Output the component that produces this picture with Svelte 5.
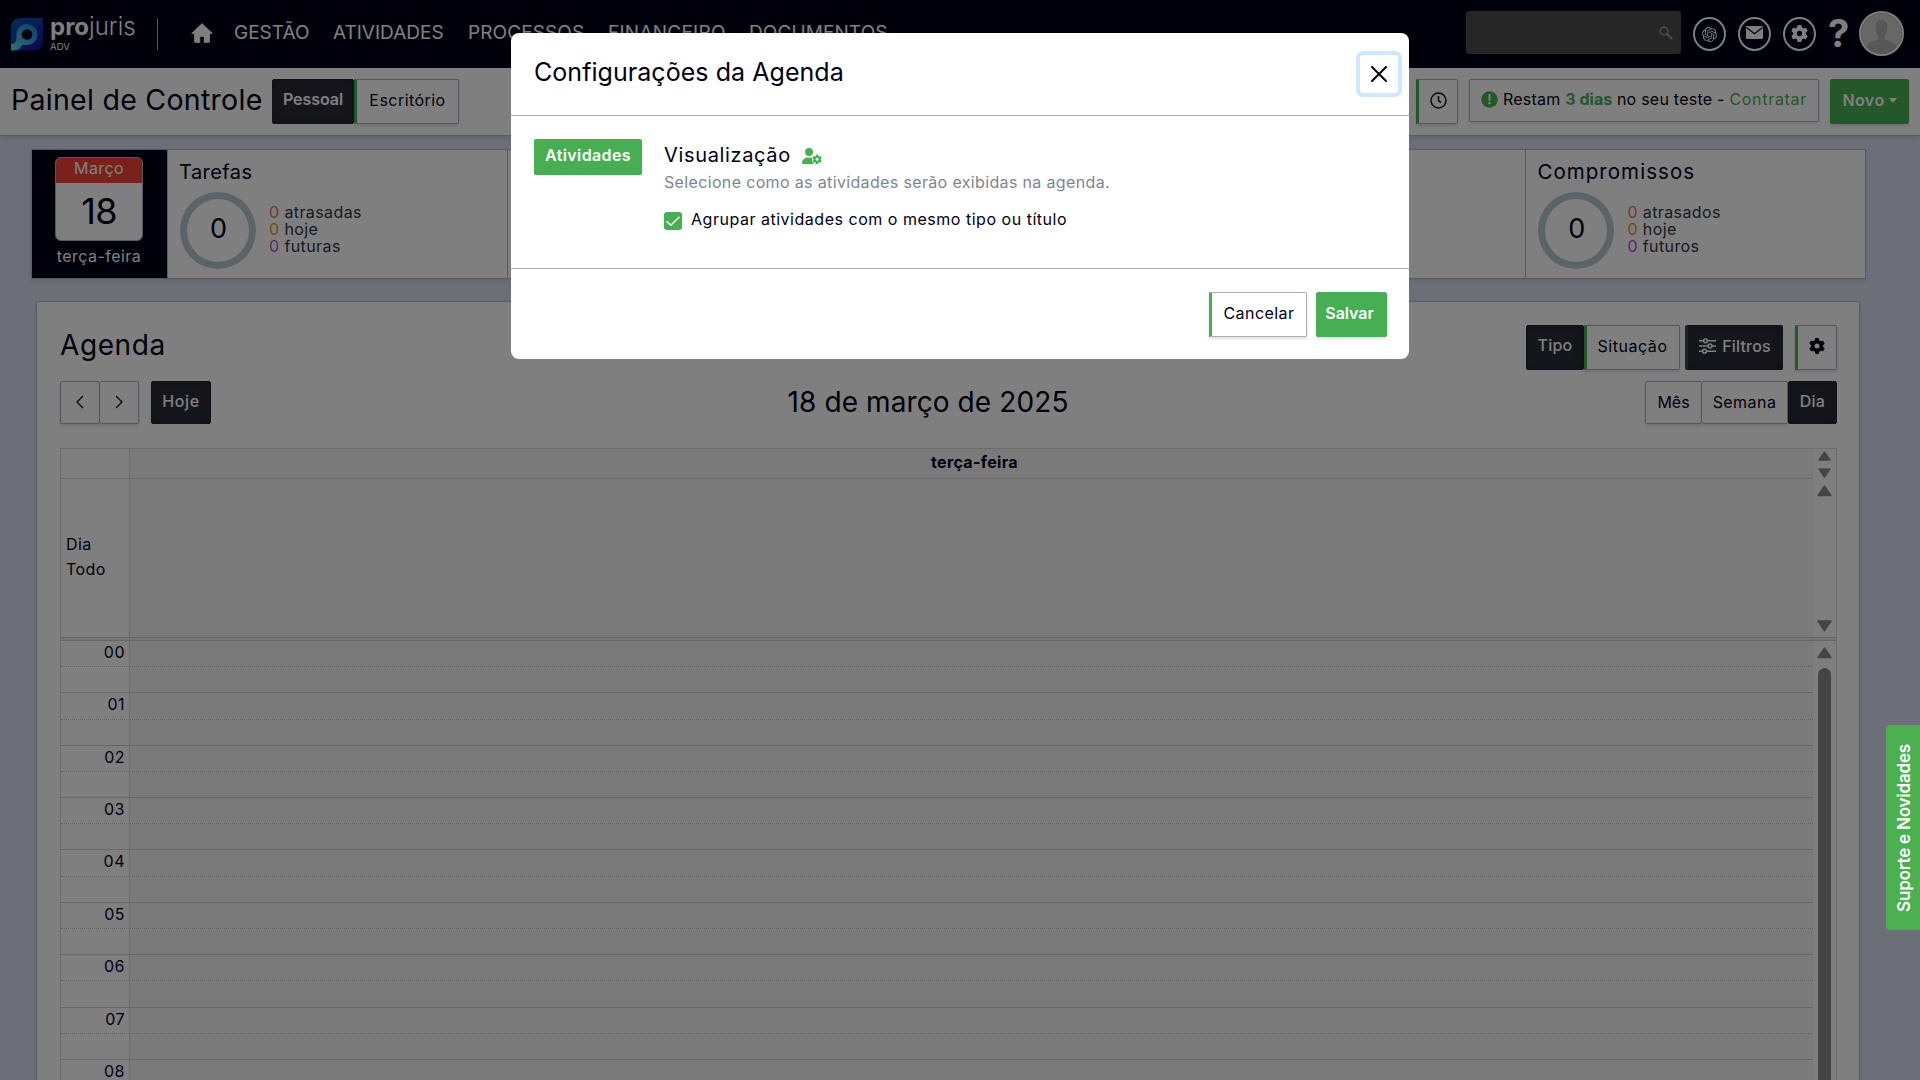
<script>
  const nav = [
    { label: 'GESTÃO', cls: 'n1' },
    { label: 'ATIVIDADES', cls: 'n2' },
    { label: 'PROCESSOS', cls: 'n3' },
    { label: 'FINANCEIRO', cls: 'n4' },
    { label: 'DOCUMENTOS', cls: 'n5' }
  ];
  // Entries without a title are panels that have not loaded their counters.
  const stats = [
    { title: 'Tarefas', total: 0, late: 'atrasadas', today: 'hoje', future: 'futuras' },
    {},
    {},
    {},
    { title: 'Compromissos', total: 0, late: 'atrasados', today: 'hoje', future: 'futuros' }
  ];
  const hours = ['00', '01', '02', '03', '04', '05', '06', '07', '08'];
  const gear =
    'M495.9 166.6c3.2 8.7 .5 18.4-6.4 24.6l-43.3 39.4c1.1 8.3 1.7 16.8 1.7 25.4s-.6 17.1-1.7 25.4l43.3 39.4c6.9 6.2 9.6 15.9 6.4 24.6c-4.4 11.9-9.7 23.3-15.8 34.3l-4.7 8.1c-6.6 11-14 21.4-22.1 31.2c-5.9 7.2-15.7 9.6-24.5 6.8l-55.7-17.7c-13.4 10.3-28.2 18.9-44 25.4l-12.5 57.1c-2 9.1-9 16.3-18.2 17.8c-13.8 2.3-28 3.5-42.5 3.5s-28.7-1.2-42.5-3.5c-9.2-1.5-16.2-8.7-18.2-17.8l-12.5-57.1c-15.8-6.5-30.6-15.1-44-25.4L83.1 425.9c-8.8 2.8-18.6 .3-24.5-6.8c-8.1-9.8-15.5-20.2-22.1-31.2l-4.7-8.1c-6.1-11-11.4-22.4-15.8-34.3c-3.2-8.7-.5-18.4 6.4-24.6l43.3-39.4C64.6 273.1 64 264.6 64 256s.6-17.1 1.7-25.4L22.4 191.2c-6.9-6.2-9.6-15.9-6.4-24.6c4.4-11.9 9.7-23.3 15.8-34.3l4.7-8.1c6.6-11 14-21.4 22.1-31.2c5.9-7.2 15.7-9.6 24.5-6.8l55.7 17.7c13.4-10.3 28.2-18.9 44-25.4l12.5-57.1c2-9.1 9-16.3 18.2-17.8C227.3 1.2 241.5 0 256 0s28.7 1.2 42.5 3.5c9.2 1.5 16.2 8.7 18.2 17.8l12.5 57.1c15.8 6.5 30.6 15.1 44 25.4l55.7-17.7c8.8-2.8 18.6-.3 24.5 6.8c8.1 9.8 15.5 20.2 22.1 31.2l4.7 8.1c6.1 11 11.4 22.4 15.8 34.3zM256 336a80 80 0 1 0 0-160 80 80 0 1 0 0 160z';
  const knot =
    'M22.2819 9.8211a5.9847 5.9847 0 0 0-.5157-4.9108 6.0462 6.0462 0 0 0-6.5098-2.9A6.0651 6.0651 0 0 0 4.9807 4.1818a5.9847 5.9847 0 0 0-3.9977 2.9 6.0462 6.0462 0 0 0 .7427 7.0966 5.98 5.98 0 0 0 .511 4.9107 6.051 6.051 0 0 0 6.5146 2.9001A5.9847 5.9847 0 0 0 13.2599 24a6.0557 6.0557 0 0 0 5.7718-4.2058 5.9894 5.9894 0 0 0 3.9977-2.9001 6.0557 6.0557 0 0 0-.7475-7.0729zm-9.022 12.6081a4.4755 4.4755 0 0 1-2.8764-1.0408l.1419-.0804 4.7783-2.7582a.7948.7948 0 0 0 .3927-.6813v-6.7369l2.02 1.1686a.071.071 0 0 1 .038.052v5.5826a4.504 4.504 0 0 1-4.4945 4.4944zm-9.6607-4.1254a4.4708 4.4708 0 0 1-.5346-3.0137l.142.0852 4.783 2.7582a.7712.7712 0 0 0 .7806 0l5.8428-3.3685v2.3324a.0804.0804 0 0 1-.0332.0615L9.74 19.9502a4.4992 4.4992 0 0 1-6.1408-1.6464zM2.3408 7.8956a4.485 4.485 0 0 1 2.3655-1.9728V11.6a.7664.7664 0 0 0 .3879.6765l5.8144 3.3543-2.0201 1.1685a.0757.0757 0 0 1-.071 0l-4.8303-2.7865A4.504 4.504 0 0 1 2.3408 7.872zm16.5963 3.8558L13.1038 8.364 15.1192 7.2a.0757.0757 0 0 1 .071 0l4.8303 2.7913a4.4944 4.4944 0 0 1-.6765 8.1042v-5.6772a.79.79 0 0 0-.407-.667zm2.0107-3.0231l-.142-.0852-4.7735-2.7818a.7759.7759 0 0 0-.7854 0L9.409 9.2297V6.8974a.0662.0662 0 0 1 .0284-.0615l4.8303-2.7866a4.4992 4.4992 0 0 1 6.6802 4.66zM8.3065 12.863l-2.02-1.1638a.0804.0804 0 0 1-.038-.0567V6.0742a4.4992 4.4992 0 0 1 7.3757-3.4537l-.142.0805L8.704 5.459a.7948.7948 0 0 0-.3927.6813zm1.0976-2.3654l2.602-1.4998 2.6069 1.4998v2.9994l-2.5974 1.4997-2.6067-1.4997Z';
</script>

{#snippet arrow(dir, size)}
  <svg class="arrow" class:down={dir === 'down'} width={size} height={size * 0.78} viewBox="0 0 14 11">
    <path d="M7 1.2 12.8 9.8H1.2Z" fill="#8b8b8b" stroke="#8b8b8b" stroke-width="1.8" stroke-linejoin="round" />
  </svg>
{/snippet}

<div class="page">
  <header class="topbar">
    <svg class="logo" width="32" height="33" viewBox="0 0 32 33">
      <defs>
        <linearGradient id="lg-bg" x1="0" y1="0" x2="1" y2="1">
          <stop offset="0" stop-color="#0f55b8" />
          <stop offset=".45" stop-color="#0b44a8" />
          <stop offset="1" stop-color="#24009a" />
        </linearGradient>
        <linearGradient id="lg-p" x1="1" y1="0" x2="0" y2="1">
          <stop offset="0" stop-color="#1d7fdc" />
          <stop offset="1" stop-color="#63dfe0" />
        </linearGradient>
      </defs>
      <path d="M10 0H32V23Q32 32.500 22 32.500H0V10Q0 0 10 0Z" fill="url(#lg-bg)" />
      <path d="M0 32.500V26Q5.500 26 5.500 20V17A10.500 10.500 0 1 1 16 27Q12 27 11 27Q10 32.500 0 32.500Z" fill="url(#lg-p)" />
      <circle cx="16" cy="16.500" r="5.300" fill="#04041c" />
    </svg>
    <div class="brand">
      <div class="brand-name"><b>pro</b>juris</div>
      <div class="brand-sub">ADV</div>
    </div>
    <i class="vsep"></i>
    <svg class="home" width="22" height="20" viewBox="0 0 22 20">
      <path d="M11 .6 21.400 10.600H18.500V18.600Q18.500 19.600 17.500 19.600H13.200V13.400H8.800V19.600H4.500Q3.500 19.600 3.500 18.600V10.600H.6Z" fill="#fff" stroke="#fff" stroke-width=".8" stroke-linejoin="round" />
    </svg>
    <nav>
      {#each nav as item}<a class={item.cls}>{item.label}</a>{/each}
    </nav>
    <div class="tools">
      <div class="search">
        <svg width="14" height="14" viewBox="0 0 14 14"><circle cx="5" cy="5" r="3.900" fill="none" stroke="#949494" stroke-width="1.600" /><path d="M8 8 12.500 12.300" stroke="#949494" stroke-width="2.400" stroke-linecap="round" /></svg>
      </div>
      <span class="round"><svg width="15" height="15" viewBox="0 0 24 24"><path d={knot} fill="#fff" /></svg></span>
      <span class="round"><svg class="mail" width="17" height="13" viewBox="0 0 17 13"><rect width="17" height="13" rx="1" fill="#fff" /><path d="M.5 1.500 8.500 7.800 16.500 1.500" fill="none" stroke="#000016" stroke-width="1.100" /></svg></span>
      <span class="round"><svg class="cog" width="17" height="17" viewBox="0 0 512 512"><path d={gear} fill="#fff" /></svg></span>
      <span class="help">?</span>
      <svg class="avatar" width="45" height="45" viewBox="0 0 45 45">
        <circle cx="22.500" cy="22.500" r="21.500" fill="#cfcfcf" stroke="#fff" stroke-width="2" />
        <circle cx="22.500" cy="22.500" r="20.300" fill="none" stroke="#8f8f8f" stroke-width=".5" />
        <path d="M22.500 9C27 9 28.600 12.300 28.400 16.500 28.200 20 27.300 22 26 23.700 25.500 25 25.600 27.500 26.300 28.200 29 30 35 30.500 37.500 35.800A20 20 0 0 1 7.500 35.800C10 30.500 16 30 18.700 28.200 19.400 27.500 19.500 25 19 23.700 17.700 22 16.800 20 16.600 16.500 16.400 12.300 18 9 22.500 9Z" fill="#aeaeae" />
      </svg>
    </div>
  </header>

  <section class="subbar">
    <h1>Painel de Controle</h1>
    <div class="group">
      <button class="btn dark w82 bold">Pessoal</button>
      <button class="btn accent w105">Escritório</button>
    </div>
    <div class="sub-right">
      <button class="btn accent clock" aria-label="Histórico">
        <svg width="17" height="17" viewBox="0 0 17 17"><circle cx="8.500" cy="8.500" r="7.500" fill="none" stroke="#15151f" stroke-width="1.500" /><path d="M8.500 4V8.700L11 10.600" fill="none" stroke="#15151f" stroke-width="1.500" /></svg>
      </button>
      <div class="trial">
        <svg width="17" height="17" viewBox="0 0 17 17"><circle cx="8.500" cy="8.500" r="8.300" fill="#48ae53" /><path d="M8.500 4V9.200" stroke="#fff" stroke-width="2" stroke-linecap="round" /><circle cx="8.500" cy="12.300" r="1.200" fill="#fff" /></svg>
        <span>Restam <b>3 dias</b> no seu teste - <em>Contratar</em></span>
      </div>
      <button class="btn green novo">Novo<i class="caret"></i></button>
    </div>
  </section>

  <section class="stats">
    <div class="today">
      <div class="cal">
        <div class="cal-m">Março</div>
        <div class="cal-d">18</div>
      </div>
      <div class="cal-w">terça-feira</div>
    </div>
    {#each stats as s}
      <article class="stat">
        {#if s.title}
          <h3 class:wide={s.title === 'Compromissos'}>{s.title}</h3>
          <div class="stat-row">
            <div class="ring">{s.total}</div>
            <ul>
              <li><b class="late">0</b> {s.late}</li>
              <li><b class="now">0</b> {s.today}</li>
              <li><b class="next">0</b> {s.future}</li>
            </ul>
          </div>
        {/if}
      </article>
    {/each}
  </section>

  <main class="agenda">
    <div class="row head">
      <h2>Agenda</h2>
      <div class="group">
        <button class="btn dark w58 med">Tipo</button>
        <button class="btn accent w96">Situação</button>
      </div>
      <button class="btn dark filters med">
        <svg width="17" height="16" viewBox="0 0 17 16"><g fill="none" stroke="#fff" stroke-width="1.500"><path d="M0 2.800H4.500M8.500 2.800H17M0 8H9M13 8H17M0 13.200H3.500M7.500 13.200H17" /><circle cx="6.500" cy="2.800" r="1.900" /><circle cx="11" cy="8" r="1.900" /><circle cx="5.500" cy="13.200" r="1.900" /></g></svg>
        Filtros
      </button>
      <button class="btn accent w42" aria-label="Configurar"><svg width="16" height="16" viewBox="0 0 512 512"><path d={gear} fill="#000014" /></svg></button>
    </div>

    <div class="row bar">
      <div class="group small">
        <button class="btn w40" aria-label="Anterior"><svg width="8" height="14" viewBox="0 0 8 14"><path d="M7 1 1 7 7 13" fill="none" stroke="#000014" stroke-width="1.200" /></svg></button>
        <button class="btn join w40" aria-label="Próximo"><svg width="8" height="14" viewBox="0 0 8 14"><path d="M1 1 7 7 1 13" fill="none" stroke="#000014" stroke-width="1.200" /></svg></button>
      </div>
      <button class="btn dark hoje med">Hoje</button>
      <div class="date">18 de março de 2025</div>
      <div class="group small">
        <button class="btn w57 mes">Mês</button>
        <button class="btn join w87">Semana</button>
        <button class="btn dark w49 med">Dia</button>
      </div>
    </div>

    <div class="table">
      <div class="line day-head">
        <div class="axis"></div>
        <div class="slot">terça-feira</div>
        <div class="sbar">{@render arrow('up', 13)}{@render arrow('down', 13)}</div>
      </div>
      <div class="line all-day">
        <div class="axis">Dia Todo</div>
        <div class="slot"></div>
        <div class="sbar">{@render arrow('up', 15)}{@render arrow('down', 15)}</div>
      </div>
      <div class="divider"></div>
      <div class="grid">
        <div class="hours">
          {#each hours as h}
            <div class="half"><div class="axis">{h}</div><div class="slot"></div></div>
            <div class="half dotted"><div class="axis"></div><div class="slot"></div></div>
          {/each}
        </div>
        <div class="sbar long">{@render arrow('up', 15)}<i class="thumb"></i></div>
      </div>
    </div>
  </main>

  <div class="backdrop"></div>
  <div class="support"><span>Suporte e Novidades</span></div>

  <div class="modal" role="dialog">
    <div class="m-head">
      <h4>Configurações da Agenda</h4>
      <button class="close" aria-label="Fechar"><svg width="16" height="16" viewBox="0 0 16 16"><path d="M1 1 15 15M15 1 1 15" stroke="#000" stroke-width="2" stroke-linecap="round" /></svg></button>
    </div>
    <div class="m-body">
      <div class="tab">Atividades</div>
      <div class="m-content">
        <div class="m-title">
          <span>Visualização</span>
          <svg width="20" height="16" viewBox="0 0 640 512"><path fill="#48ae53" d="M224 256A128 128 0 1 0 224 0a128 128 0 1 0 0 256zm-45.700 48C79.800 304 0 383.800 0 482.300C0 498.700 13.300 512 29.700 512H392C350 485 330 450 322 400L335 325C315 311 290 304 269.700 304z" /><g transform="translate(330 210) scale(.6)"><path fill="#48ae53" d={gear} /></g></svg>
        </div>
        <p>Selecione como as atividades serão exibidas na agenda.</p>
        <div class="check">
          <svg width="18" height="18" viewBox="0 0 18 18"><rect width="18" height="18" rx="3" fill="#48ae53" /><path d="M2.500 9.200 6.800 13.300 15.500 4.800" fill="none" stroke="#fff" stroke-width="1.400" /></svg>
          <span>Agrupar atividades com o mesmo tipo ou título</span>
        </div>
      </div>
    </div>
    <div class="m-foot">
      <button class="btn accent cancel">Cancelar</button>
      <button class="btn green save">Salvar</button>
    </div>
  </div>
</div>

<style>
  :global(body) { overflow: hidden; }
  .page, .page * { box-sizing: border-box; }
  .page { position: relative; width: 1920px; height: 1080px; overflow: hidden; background: #d9dff0; font: 16px/20px Inter, "Liberation Sans", sans-serif; color: #000014; }
  h1, h2, h3, h4, p, ul { margin: 0; padding: 0; font-weight: 400; list-style: none; }
  svg { display: block; flex: none; }

  .topbar { height: 68px; background: #000016; color: #fff; display: flex; align-items: center; padding: 0 16px 0 11px; }
  .brand { width: 90px; margin: -4px 0 0 7px; height: 39px; }
  .brand-name { font-size: 24px; line-height: 28px; white-space: nowrap; font-weight: 300; letter-spacing: 0; }
  .brand-name b { font-weight: 700; }
  .brand-sub { font-size: 9.500px; line-height: 12px; letter-spacing: .1px; }
  .vsep { width: 1px; height: 32px; background: #a9a9b4; margin-left: 17px; }
  .home { margin: -3px 0 0 33px; }
  nav { display: flex; font-size: 19px; margin: -2px 0 0 21px; }
  nav a { margin-right: 22px; white-space: nowrap; }
  .n1 { width: 77px; letter-spacing: 0; }
  .n2 { width: 112px; letter-spacing: 0; }
  .n3 { width: 118px; letter-spacing: .1px; margin-left: 1px; }
  .n4 { width: 119px; letter-spacing: .25px; }
  .n5 { letter-spacing: .1px; }
  .tools { margin-left: auto; display: flex; align-items: center; }
  .search { width: 215px; height: 43px; background: #4c4c4c; border-radius: 3px; margin: -3px 12px 0 0; display: flex; align-items: center; justify-content: flex-end; padding-right: 8px; }
  .round { width: 33px; height: 34px; border: 2px solid #fff; border-radius: 50%; margin-right: 12px; display: flex; align-items: center; justify-content: center; }
  .mail { margin-top: -3px; }
  .cog { margin-top: -2px; }
  .help { width: 20px; font-size: 38px; font-weight: 700; line-height: 40px; margin: -3px 11px 0 0; }
  .avatar { margin-top: -1px; }

  .subbar { height: 68px; background: #fff; border-bottom: 1px solid #b0b2c6; box-shadow: 0 2px 4px rgba(0, 0, 0, .12); display: flex; align-items: center; padding: 0 11px; }
  h1 { font-size: 28.500px; line-height: 40px; width: 261px; letter-spacing: .28px; margin-top: -4px; white-space: nowrap; }
  .group { display: flex; }
  .sub-right { display: flex; margin-left: auto; align-items: flex-start; height: 45px; }
  .btn { font: inherit; color: #000014; height: 45px; background: #fff; border: 1px solid #abadc2; border-radius: 2px; display: flex; align-items: center; justify-content: center; padding: 0 0 3px; letter-spacing: .45px; box-shadow: 0 2px 3px rgba(0, 0, 0, .12); white-space: nowrap; }
  .btn.accent { border-left: 3px solid #48ae53; border-radius: 0 2px 2px 0; }
  .btn.dark { background: #2a2c38; border-color: #22242e; color: #fff; box-shadow: inset 0 0 8px rgba(0, 0, 0, .25); padding-bottom: 5px; letter-spacing: .2px; }
  .btn.green { background: #48ae53; border-color: #48ae53; color: #fff; font-weight: 600; }
  .btn.bold { font-weight: 600; letter-spacing: -.05px; }
  .btn.med { font-weight: 500; }
  .w82 { width: 82px; }
  .w105 { width: 105px; }
  .w58 { width: 58px; }
  .w96 { width: 96px; }
  .btn.w96 { letter-spacing: .55px; padding-right: 1px; }
  .w42 { width: 42px; }
  .clock { width: 42px; margin-right: 11px; }
  .trial { width: 350px; height: 43px; border: 1px solid #abadc2; border-radius: 2px; box-shadow: 0 1px 3px rgba(0, 0, 0, .12); display: flex; align-items: center; gap: 5px; padding: 0 0 3px 11px; margin-right: 11px; white-space: nowrap; }
  .trial span { letter-spacing: .24px; }
  .trial b { color: #48ae53; letter-spacing: 0; }
  .trial em { color: #48ae53; font-style: normal; letter-spacing: .7px; }
  .novo { width: 79px; gap: 4px; }
  .caret { border: 4px solid transparent; border-top: 5px solid #fff; border-bottom: 0; }

  .stats { display: flex; width: 1835px; height: 130px; margin: 13px 0 0 31px; background: #fff; border: 1px solid #b0b2c6; box-shadow: 0 2px 4px rgba(0, 0, 0, .1); }
  .today { width: 135px; background: #000016; color: #fff; display: flex; flex-direction: column; align-items: center; padding: 7px 1px 0 0; }
  .cal { width: 88px; height: 84px; background: #fff; border: 1px solid #abadc2; border-radius: 6px; overflow: hidden; text-align: center; }
  .cal-m { height: 26px; margin: -1px -1px 0; background: #f44336; line-height: 23px; letter-spacing: .4px; }
  .cal-d { color: #000014; font-size: 36px; line-height: 56px; letter-spacing: -.8px; }
  .cal-w { line-height: 31px; letter-spacing: .45px; }
  .stat { flex: 1 1 0; min-width: 0; border-left: 1px solid #b0b2c6; padding: 12px 0 0 11px; }
  h3 { font-size: 20px; line-height: 20px; letter-spacing: .45px; }
  h3.wide { font-size: 20.500px; letter-spacing: 1.050px; }
  .stat-row { display: flex; margin: 10px 0 0 1px; }
  .ring { width: 76px; height: 77px; border: 7px solid #b4c8cd; border-radius: 50%; font-size: 27px; line-height: 59px; text-align: center; padding-left: 1px; }
  ul { margin: 12px 0 0 13px; }
  li { line-height: 17px; color: #32343e; letter-spacing: .4px; }
  li b { font-weight: 400; }
  .late { color: #f0705f; }
  .now { color: #f09434; }
  .next { color: #b055d8; }

  .agenda { width: 1824px; height: 800px; margin: 22px 0 0 36px; background: #fff; border: 1px solid #b0b2c6; border-radius: 2px; padding: 23px 22px 0 23px; box-shadow: 0 2px 4px rgba(0, 0, 0, .1); }
  .row { display: flex; }
  h2 { font-size: 28px; line-height: 41px; letter-spacing: .6px; margin-right: auto; }
  .head { height: 56px; align-items: flex-start; }
  .filters { width: 98px; gap: 6px; margin: 0 12px 0 5px; border-left: 3px solid #40434c; }
  .filters.btn { padding-bottom: 3px; border-left-color: #40434c; }
  .bar { align-items: flex-start; height: 67px; }
  .small .btn, .hoje { height: 43px; }
  .small .btn { padding-bottom: 2px; }
  .small .btn.dark, .btn.hoje { padding-bottom: 3px; }
  .btn.join { border-left: 0; }
  .w40 { width: 39.500px; }
  .hoje { width: 60px; margin-left: 12px; }
  .btn.hoje { letter-spacing: .6px; }
  .date { flex: 1; text-align: center; font-size: 28px; line-height: 42px; letter-spacing: .1px; }
  .w57 { width: 57px; }
  .w87 { width: 86px; }
  .w49 { width: 49px; }
  .btn.mes { letter-spacing: 0; }

  .table { border: 1px solid #d5d9dc; border-bottom: 0; width: 1777px; height: 680px; }
  .line { display: flex; }
  .axis { width: 69px; border-right: 1px solid #d5d9dc; flex: none; }
  .slot { flex: 1; background: #f5f5f5; }
  .sbar { width: 23px; background: #fdfdfd; flex: none; display: flex; flex-direction: column; align-items: center; justify-content: space-between; }
  .day-head { height: 29px; }
  .day-head .slot { text-align: center; font-weight: 700; line-height: 27px; letter-spacing: .35px; padding-left: 6px; }
  .day-head .sbar { padding: 2px 0 0; }
  .arrow.down { transform: rotate(180deg); }
  .all-day { height: 159px; }
  .all-day .axis { display: flex; align-items: center; padding: 0 20px 2px 5px; line-height: 25px; letter-spacing: .4px; }
  .all-day .axis, .all-day .slot { border-top: 1px solid #d5d9dc; }
  .all-day .sbar { padding: 7px 0 5px; }
  .divider { height: 2.9375px; border-top: 1px solid #c6cacf; background: #eceef0; }
  .grid { display: flex; height: 480px; overflow: hidden; }
  .hours { flex: 1; }
  .half { height: 26.1875px; display: flex; border-top: 1px solid #c9cdd1; }
  .half.dotted { border-top: 1px dotted #bfc3c7; }
  .half .axis { text-align: right; padding: 1px 4px 0 0; line-height: 20px; letter-spacing: .5px; }
  .long { padding-top: 6px; justify-content: flex-start; border-top: 1px solid #c9cdd1; }
  .thumb { width: 13px; flex: 1; background: #8b8b8b; border-radius: 7px 7px 0 0; margin-top: 9px; }

  .backdrop { position: absolute; inset: 0; background: rgba(0, 0, 0, .5); }
  .support { position: absolute; right: 0; top: 725px; width: 34px; height: 205px; background: #4cb050; border-radius: 4px 0 0 4px; display: flex; align-items: center; justify-content: center; padding-left: 2px; }
  .support span { writing-mode: vertical-rl; transform: rotate(180deg); color: #fff; font: 600 17px/20px Inter, "Liberation Sans", sans-serif; letter-spacing: -.2px; white-space: nowrap; }

  .modal { position: absolute; left: 511px; top: 33px; width: 898px; height: 326px; background: #fff; border-radius: 8px; }
  .m-head { height: 83px; border-bottom: 1px solid #abadc2; display: flex; align-items: flex-start; justify-content: space-between; padding: 22px 11px 0 23px; }
  h4 { font-size: 25px; line-height: 35px; letter-spacing: .05px; }
  .close { width: 38px; height: 38px; border: 0; background: #fff; border-radius: 3px; box-shadow: 0 0 0 4px #cfe7fd; display: flex; align-items: center; justify-content: center; padding: 0; }
  .m-body { height: 153px; border-bottom: 1px solid #abadc2; display: flex; padding: 23px; }
  .tab { width: 108px; height: 36px; background: #48ae53; border-radius: 2px; color: #fff; font-weight: 600; text-align: center; line-height: 32px; letter-spacing: .38px; }
  .m-content { margin-left: 22px; }
  .m-title { display: flex; align-items: center; gap: 11px; height: 32px; font-size: 20px; letter-spacing: .65px; }
  .m-title svg { margin-top: 2px; }
  p { color: #7d868e; letter-spacing: .35px; line-height: 22px; }
  .check { display: flex; align-items: center; gap: 9px; margin-top: 17px; height: 22px; letter-spacing: .52px; }
  .check span { margin-top: -5px; }
  .m-foot { display: flex; justify-content: flex-end; gap: 9px; padding: 23px 22px 0 0; }
  .cancel { width: 98px; }
  .m-foot .btn { padding-bottom: 4px; }
  .save { width: 71px; }
  .m-foot .btn.save { letter-spacing: -.05px; padding-right: 4px; }
</style>
